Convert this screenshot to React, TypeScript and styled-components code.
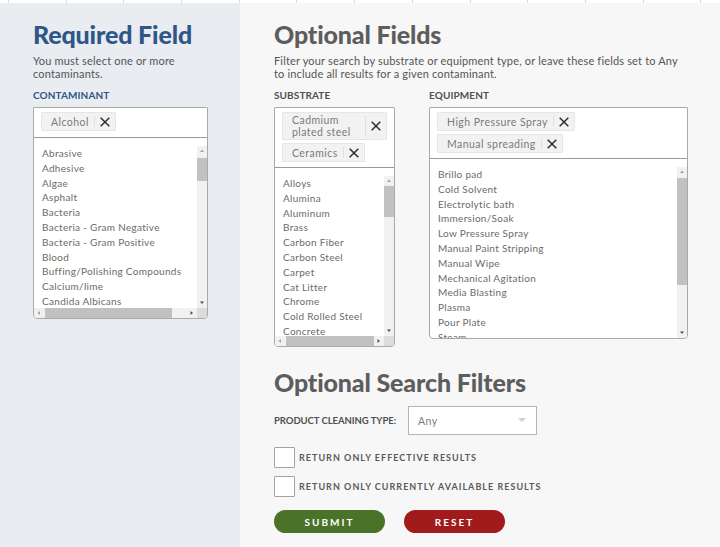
import React from "react";
import styled, { createGlobalStyle } from "styled-components";

const GlobalStyle = createGlobalStyle`
  html, body { margin: 0; padding: 0; }
  body {
    font-family: "Lato", "Open Sans", "Liberation Sans", sans-serif;
    background: #f7f7f7;
    color: #5c5c5c;
  }
  * { box-sizing: border-box; }
`;

const Page = styled.div`
  width: 720px;
  min-height: 547px;
  display: flex;
  flex-direction: column;
`;

const TopStrip = styled.div`
  display: flex;
  height: 3px;
  background: #fff;
  padding-left: 8px;
  overflow: hidden;
  flex-shrink: 0;
`;

const StripCell = styled.div`
  flex: 0 0 57.7px;
  height: 3px;
  border-left: 1px solid #d9d9d9;
`;

const Main = styled.div`
  flex: 1;
  display: grid;
  grid-template-columns: 240px 1fr;
`;

const Panel = styled.section<{ $tone: "blue" | "grey" }>`
  background: ${(p) => (p.$tone === "blue" ? "#e9ecf1" : "#f7f7f7")};
  padding: 16px 32px 14px ${(p) => (p.$tone === "blue" ? "33px" : "34px")};
  display: flex;
  flex-direction: column;
`;

const Heading = styled.h2<{ $tone: "blue" | "grey" }>`
  margin: 0;
  font-family: "Lato", "Open Sans", sans-serif;
  font-weight: 900;
  font-size: 25px;
  line-height: 30px;
  letter-spacing: -0.15px;
  color: ${(p) => (p.$tone === "blue" ? "#2f5688" : "#5d5d5d")};
`;

const Desc = styled.p`
  margin: 5px 0 0;
  font-size: 11px;
  line-height: 13px;
  letter-spacing: 0.17px;
  color: #555;
`;

const FieldLabel = styled.div<{ $tone: "blue" | "grey" }>`
  margin: 9px 0 6px;
  font-size: 10px;
  line-height: 12px;
  font-weight: 700;
  letter-spacing: 0.1px;
  text-transform: uppercase;
  color: ${(p) => (p.$tone === "blue" ? "#2f5688" : "#505050")};
`;

const FieldRow = styled.div`
  display: flex;
  gap: 34px;
  align-items: flex-start;
`;

const FieldCol = styled.div<{ $w: number }>`
  width: ${(p) => p.$w}px;
  display: flex;
  flex-direction: column;
`;

const Box = styled.div`
  background: #fff;
  border: 1px solid #a9a9a9;
  border-radius: 1px 1px 4px 4px;
  overflow: hidden;
`;

const TagArea = styled.div<{ $padB: number }>`
  display: flex;
  flex-wrap: wrap;
  gap: 3px 5px;
  padding: 4px 7px ${(p) => p.$padB}px;
  border-bottom: 1px solid #9a9a9a;
`;

const Tag = styled.div`
  display: inline-flex;
  align-items: stretch;
  min-height: 19px;
  max-width: 100%;
  background: #f2f2f2;
  border: 1px solid #e6e6e6;
  border-radius: 1px;
`;

const TagText = styled.span`
  display: flex;
  align-items: center;
  padding: 1px 5px 1px 9px;
  font-size: 10.5px;
  line-height: 12px;
  letter-spacing: 0.45px;
  color: #7a7a7a;
`;

const TagRemove = styled.span`
  flex: 0 0 21px;
  display: flex;
  align-items: center;
  justify-content: center;
  border-left: 1px solid #e0e0e0;
  margin: 3px 0;
`;

const ListWrap = styled.div<{ $h: number }>`
  padding-top: 8px;
  height: ${(p) => p.$h}px;
  display: flex;
  flex-direction: column;
`;

const ListRow = styled.div`
  flex: 1;
  min-height: 0;
  display: flex;
`;

const Options = styled.ul`
  flex: 1;
  min-width: 0;
  list-style: none;
  margin: 0;
  padding: 0 0 0 8px;
  overflow: hidden;
`;

const Option = styled.li`
  font-size: 10px;
  line-height: 14.8px;
  letter-spacing: 0.3px;
  color: #6e6a66;
  white-space: nowrap;
`;

/* drawn scrollbars */
const VBar = styled.div`
  flex: 0 0 10px;
  display: flex;
  flex-direction: column;
  background: #f1f1f1;
`;

const HBarRow = styled.div`
  flex: 0 0 10px;
  display: flex;
`;

const HBar = styled.div`
  flex: 1;
  display: flex;
  background: #f1f1f1;
`;

const Corner = styled.div`
  flex: 0 0 10px;
  background: #dcdcdc;
`;

const Arrow = styled.div`
  flex: 0 0 10px;
  width: 10px;
  height: 10px;
  display: flex;
  align-items: center;
  justify-content: center;
`;

const VTrack = styled.div<{ $offset: number }>`
  flex: 1;
  padding-top: ${(p) => p.$offset}px;
`;

const HTrack = styled.div<{ $offset: number }>`
  flex: 1;
  display: flex;
  padding-left: ${(p) => p.$offset}px;
`;

const VThumb = styled.div<{ $size: number }>`
  height: ${(p) => p.$size}px;
  background: #c1c1c1;
`;

const HThumb = styled.div<{ $size: number }>`
  width: ${(p) => p.$size}px;
  background: #c1c1c1;
`;

const ArrowIcon = ({ dir, dark }: { dir: "up" | "down" | "left" | "right"; dark?: boolean }) => {
  const pts: Record<string, string> = {
    up: "1,4 5,4 3,1.5",
    down: "1,1.5 5,1.5 3,4",
    left: "4,1 4,5 1.5,3",
    right: "1.5,1 1.5,5 4,3",
  };
  return (
    <svg width="6" height="6" viewBox="0 0 6 6">
      <polygon points={pts[dir]} fill={dark ? "#505050" : "#a3a3a3"} />
    </svg>
  );
};

const FiltersSection = styled.div`
  margin-top: 20px;
  display: flex;
  flex-direction: column;
`;

const InlineField = styled.div`
  display: flex;
  align-items: center;
  gap: 12px;
  margin-top: 9px;
`;

const InlineLabel = styled.label`
  font-size: 9.5px;
  font-weight: 700;
  letter-spacing: -0.05px;
  color: #505050;
`;

const SelectBox = styled.div`
  width: 129px;
  height: 29px;
  background: #fff;
  border: 1.5px solid #b5b5b5;
  display: flex;
  align-items: center;
  justify-content: space-between;
  padding: 0 10px 0 9px;
  font-size: 10.5px;
  letter-spacing: 0.4px;
  color: #7a7a7a;
`;

const Check = styled.label`
  display: flex;
  align-items: center;
  gap: 4px;
  margin-top: 12px;
  & + & {
    margin-top: 8px;
  }
`;

const CheckSquare = styled.span`
  width: 21px;
  height: 21px;
  background: #fff;
  border: 1.5px solid #a3a3a3;
  border-radius: 1px;
  flex-shrink: 0;
`;

const CheckText = styled.span`
  font-size: 9px;
  font-weight: 700;
  letter-spacing: 1.02px;
  color: #5a5a5a;
  text-transform: uppercase;
`;

const ButtonRow = styled.div`
  display: flex;
  gap: 19px;
  margin-top: 13px;
`;

const Btn = styled.button<{ $variant: "submit" | "reset" }>`
  width: ${(p) => (p.$variant === "submit" ? "111px" : "101px")};
  height: 23px;
  border: none;
  border-radius: 12px;
  background: ${(p) => (p.$variant === "submit" ? "#4b7229" : "#a21b1c")};
  color: #fff;
  font-family: "Lato", sans-serif;
  font-size: 10px;
  font-weight: 700;
  letter-spacing: 2px;
  padding: 0;
  cursor: pointer;
`;

const XIcon = () => (
  <svg width="10" height="10" viewBox="0 0 10 10">
    <path d="M1.2 1.2 L8.8 8.8 M8.8 1.2 L1.2 8.8" stroke="#2d2d2d" strokeWidth="1.5" strokeLinecap="square" />
  </svg>
);

const Chevron = () => (
  <svg width="8" height="5" viewBox="0 0 8 5">
    <path d="M0 0 L8 0 L4 4 Z" fill="#d0d0d0" />
  </svg>
);

const contaminants = [
  "Abrasive", "Adhesive", "Algae", "Asphalt", "Bacteria", "Bacteria - Gram Negative",
  "Bacteria - Gram Positive", "Blood", "Buffing/Polishing Compounds", "Calcium/lime",
  "Candida Albicans",
];

const substrates = [
  "Alloys", "Alumina", "Aluminum", "Brass", "Carbon Fiber", "Carbon Steel", "Carpet",
  "Cat Litter", "Chrome", "Cold Rolled Steel", "Concrete",
];

const equipment = [
  "Brillo pad", "Cold Solvent", "Electrolytic bath", "Immersion/Soak", "Low Pressure Spray",
  "Manual Paint Stripping", "Manual Wipe", "Mechanical Agitation", "Media Blasting", "Plasma",
  "Pour Plate", "Steam",
];

type Bar = { offset: number; size: number };

type MultiProps = {
  tags: string[];
  items: string[];
  listH: number;
  padB: number;
  v: Bar;
  h?: Bar;
};

const MultiSelect = ({ tags, items, listH, padB, v, h }: MultiProps) => (
  <Box>
    <TagArea $padB={padB}>
      {tags.map((t) => (
        <Tag key={t}>
          <TagText>{t}</TagText>
          <TagRemove>
            <XIcon />
          </TagRemove>
        </Tag>
      ))}
    </TagArea>
    <ListWrap $h={listH}>
      <ListRow>
        <Options>
          {items.map((i) => (
            <Option key={i}>{i}</Option>
          ))}
        </Options>
        <VBar>
          <Arrow>
            <ArrowIcon dir="up" />
          </Arrow>
          <VTrack $offset={v.offset}>
            <VThumb $size={v.size} />
          </VTrack>
          <Arrow>
            <ArrowIcon dir="down" dark />
          </Arrow>
        </VBar>
      </ListRow>
      {h && (
        <HBarRow>
          <HBar>
            <Arrow>
              <ArrowIcon dir="left" />
            </Arrow>
            <HTrack $offset={h.offset}>
              <HThumb $size={h.size} />
            </HTrack>
            <Arrow>
              <ArrowIcon dir="right" dark />
            </Arrow>
          </HBar>
          <Corner />
        </HBarRow>
      )}
    </ListWrap>
  </Box>
);

export default function App() {
  return (
    <Page>
      <GlobalStyle />
      <TopStrip>
        {Array.from({ length: 13 }).map((_, i) => (
          <StripCell key={i} />
        ))}
      </TopStrip>
      <Main>
        <Panel $tone="blue">
          <Heading $tone="blue">Required Field</Heading>
          <Desc>You must select one or more contaminants.</Desc>
          <FieldLabel $tone="blue">Contaminant</FieldLabel>
          <MultiSelect
            tags={["Alcohol"]}
            items={contaminants}
            listH={180}
            padB={6}
            v={{ offset: 2, size: 23 }}
            h={{ offset: 1, size: 127 }}
          />
        </Panel>
        <Panel $tone="grey">
          <Heading $tone="grey">Optional Fields</Heading>
          <Desc>
            Filter your search by substrate or equipment type, or leave these fields set to Any to
            include all results for a given contaminant.
          </Desc>
          <FieldRow>
            <FieldCol $w={121}>
              <FieldLabel $tone="grey">Substrate</FieldLabel>
              <MultiSelect
                tags={["Cadmium plated steel", "Ceramics"]}
                items={substrates}
                listH={178}
                padB={5}
                v={{ offset: 0, size: 31 }}
                h={{ offset: 1, size: 88 }}
              />
            </FieldCol>
            <FieldCol $w={259}>
              <FieldLabel $tone="grey">Equipment</FieldLabel>
              <MultiSelect
                tags={["High Pressure Spray", "Manual spreading"]}
                items={equipment}
                listH={179}
                padB={5}
                v={{ offset: 1, size: 107 }}
              />
            </FieldCol>
          </FieldRow>
          <FiltersSection>
            <Heading $tone="grey">Optional Search Filters</Heading>
            <InlineField>
              <InlineLabel>PRODUCT CLEANING TYPE:</InlineLabel>
              <SelectBox>
                <span>Any</span>
                <Chevron />
              </SelectBox>
            </InlineField>
            <Check>
              <CheckSquare />
              <CheckText>Return only effective results</CheckText>
            </Check>
            <Check>
              <CheckSquare />
              <CheckText>Return only currently available results</CheckText>
            </Check>
            <ButtonRow>
              <Btn $variant="submit">SUBMIT</Btn>
              <Btn $variant="reset">RESET</Btn>
            </ButtonRow>
          </FiltersSection>
        </Panel>
      </Main>
    </Page>
  );
}
